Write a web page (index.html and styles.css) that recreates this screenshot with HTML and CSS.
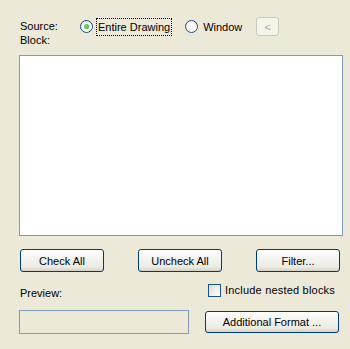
FILE: index.html
```html
<!DOCTYPE html>
<html>
<head>
    <meta charset="utf-8">
    <title>Block Source</title>
    <link rel="stylesheet" href="styles.css">
</head>
<body>
    <div class="dialog">
        <div class="source-row">
            <span class="label source-label">Source:</span>
            <label class="radio checked">
                <span class="radio-dot"></span>
                <span class="radio-text focused">Entire Drawing</span>
            </label>
            <label class="radio">
                <span class="radio-dot"></span>
                <span class="radio-text">Window</span>
            </label>
            <button class="pick-btn" disabled>&lt;</button>
        </div>
        <div class="label block-label">Block:</div>
        <div class="block-list"></div>
        <div class="button-row">
            <button class="xp-btn">Check All</button>
            <button class="xp-btn">Uncheck All</button>
            <button class="xp-btn">Filter...</button>
        </div>
        <div class="preview-row">
            <span class="label">Preview:</span>
            <label class="check">
                <span class="check-box"></span>
                <span class="check-text">Include nested blocks</span>
            </label>
        </div>
        <div class="bottom-row">
            <div class="preview-box"></div>
            <button class="xp-btn format-btn">Additional Format ...</button>
        </div>
    </div>
</body>
</html>
```

FILE: styles.css
```css
* {
    box-sizing: border-box;
    margin: 0;
    padding: 0;
}
body {
    background: #ece9d8;
    font-family: "Liberation Sans", Arial, sans-serif;
    font-size: 11px;
    color: #000;
}
.dialog {
    width: 350px;
    height: 349px;
    padding: 17px 0 0 19px;
}
.label {
    padding-left: 1px;
    line-height: 13px;
}
.source-row {
    display: flex;
    align-items: center;
    height: 19px;
}
.source-label {
    width: 61px;
}
.radio {
    display: flex;
    align-items: center;
}
.radio-dot {
    width: 13px;
    height: 13px;
    border: 1px solid #1c5180;
    border-radius: 50%;
    background: radial-gradient(circle at 60% 60%, #ffffff 40%, #dcdad0 100%);
    margin-right: 3px;
    position: relative;
}
.checked .radio-dot::after {
    content: "";
    position: absolute;
    left: 3px;
    top: 3px;
    width: 5px;
    height: 5px;
    border-radius: 50%;
    background: radial-gradient(circle at 40% 40%, #7de37d, #21a121);
}
.radio-text {
    padding: 2px 1px;
    border: 1px dotted transparent;
}
.radio-text.focused {
    border-color: #000;
}
.radio + .radio {
    margin-left: 13px;
}
.pick-btn {
    margin-left: 12px;
    width: 23px;
    height: 19px;
    border: 1px solid #cac8bb;
    border-radius: 3px;
    background: #f5f4ea;
    color: #aca899;
    font-family: "Liberation Sans", Arial, sans-serif;
    font-size: 11px;
}
.block-label {
    margin-top: -2px;
}
.block-list {
    margin-top: 8px;
    width: 324px;
    height: 181px;
    background: #fff;
    border: 1px solid #7f9db9;
}
.button-row {
    display: flex;
    gap: 34px;
    margin-top: 13px;
    padding-left: 1px;
}
.xp-btn {
    width: 84px;
    height: 23px;
    border: 1px solid #003c74;
    border-radius: 3px;
    background: linear-gradient(#ffffff 0%, #f4f3ee 40%, #ecebe4 80%, #d6d0c5 100%);
    font-family: "Liberation Sans", Arial, sans-serif;
    font-size: 11px;
    color: #000;
}
.preview-row {
    display: flex;
    justify-content: space-between;
    align-items: center;
    margin-top: 11px;
    height: 14px;
    width: 316px;
}
.preview-row .label {
    margin-top: 6px;
}
.check {
    display: flex;
    align-items: center;
}
.check-box {
    width: 13px;
    height: 13px;
    border: 1px solid #1c5180;
    background: linear-gradient(135deg, #dcdad0, #ffffff);
    margin-right: 4px;
}
.check-text {
    letter-spacing: 0.2px;
}
.bottom-row {
    display: flex;
    align-items: flex-start;
    margin-top: 13px;
}
.preview-box {
    width: 170px;
    height: 24px;
    border: 1px solid #7f9db9;
    background: #ece9d8;
}
.format-btn {
    margin-left: 16px;
    margin-top: 1px;
    width: 134px;
    height: 22px;
}
```
